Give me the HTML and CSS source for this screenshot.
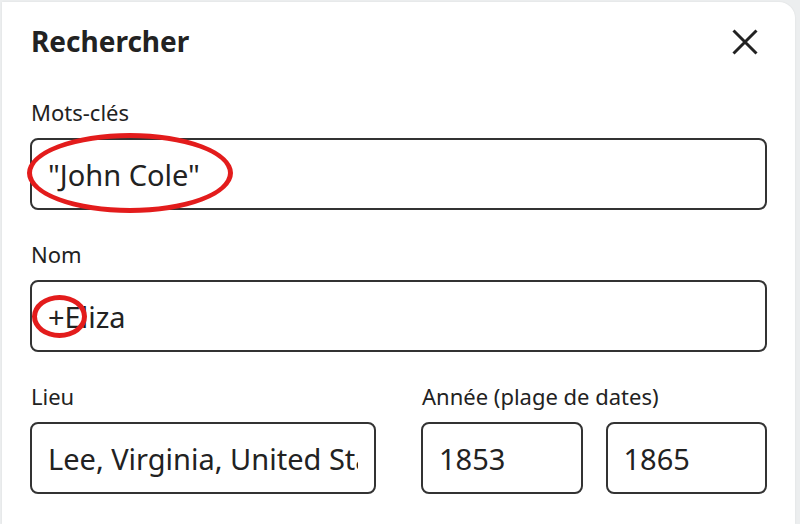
FILE: index.html
```html
<!DOCTYPE html>
<html lang="fr">
<head>
<meta charset="utf-8">
<title>Rechercher</title>
<link rel="stylesheet" href="styles.css">
</head>
<body>
<div class="panel">
  <div class="header">
    <h1 class="title">Rechercher</h1>
    <button class="close" aria-label="Fermer">
      <svg width="26" height="26" viewBox="0 0 26 26"><path d="M1.5 1.5 L24.5 24.5 M24.5 1.5 L1.5 24.5" stroke="#222" stroke-width="3" fill="none"/></svg>
    </button>
  </div>
  <div class="field">
    <label class="label">Mots-clés</label>
    <div class="box">
      <input class="input" type="text" value="&quot;John Cole&quot;">
      <span class="ring ring-keywords"></span>
    </div>
  </div>
  <div class="field">
    <label class="label">Nom</label>
    <div class="box">
      <input class="input" type="text" value="+Eliza">
      <span class="ring ring-plus"></span>
    </div>
  </div>
  <div class="row">
    <div class="field">
      <label class="label">Lieu</label>
      <div class="box">
        <input class="input" type="text" value="Lee, Virginia, United States">
      </div>
    </div>
    <div class="field">
      <label class="label">Année (plage de dates)</label>
      <div class="years">
        <div class="box"><input class="input" type="text" value="1853"></div>
        <div class="box"><input class="input" type="text" value="1865"></div>
      </div>
    </div>
  </div>
</div>
</body>
</html>
```
FILE: styles.css
```css
html, body {
  margin: 0;
  padding: 0;
}
body {
  background: #eceeef;
  font-family: "Noto Sans", "Open Sans", sans-serif;
  color: #222;
  height: 524px;
  overflow: hidden;
}
.panel {
  box-sizing: border-box;
  margin: 2px 5px 0 2px;
  height: 522px;
  background: #fff;
  border-radius: 0 16px 0 0;
  padding: 19px 28px 0 28px;
  box-shadow: 0 0 2px rgba(0,0,0,0.08);
}
.header {
  display: flex;
  justify-content: space-between;
  align-items: center;
  height: 40px;
  margin-bottom: 36px;
}
.title {
  margin: 0 0 0 1px;
  font-size: 28px;
  line-height: 40px;
  font-weight: 700;
  color: #222;
}
.close {
  border: 0;
  background: none;
  padding: 0;
  margin: 1px 9px 0 0;
  width: 26px;
  height: 26px;
  display: flex;
}
.field {
  display: flex;
  flex-direction: column;
  margin-bottom: 29px;
}
.label {
  font-size: 22px;
  line-height: 30px;
  margin: 0 0 11px 1px;
  color: #222;
}
.box {
  position: relative;
}
.input {
  display: block;
  box-sizing: border-box;
  width: 100%;
  height: 72px;
  border: 2px solid #333;
  border-radius: 8px;
  padding: 0 16px;
  font-family: inherit;
  font-size: 29px;
  color: #222;
  background: #fff;
  outline: none;
}
.row {
  display: grid;
  grid-template-columns: 1fr 1fr;
  column-gap: 45px;
}
.row .field {
  margin-bottom: 0;
}
.years {
  display: grid;
  grid-template-columns: 1fr 1fr;
  column-gap: 23px;
}
.ring {
  position: absolute;
  box-sizing: border-box;
  border: 5px solid #e31c1c;
  border-radius: 50%;
  pointer-events: none;
}
.ring-keywords {
  left: -3px;
  top: -5px;
  width: 206px;
  height: 80px;
}
.ring-plus {
  left: 2px;
  top: 15px;
  width: 55px;
  height: 43px;
}
```
